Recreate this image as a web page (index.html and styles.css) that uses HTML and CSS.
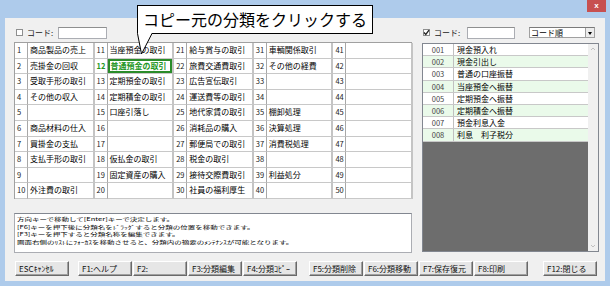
FILE: index.html
```html
<!DOCTYPE html>
<html lang="ja">
<head>
	<meta charset="UTF-8">
	<title>分類コピー</title>
	<link rel="stylesheet" href="styles.css">
</head>
<body>
	<div class="window">
		<div class="titlebar"><span class="close">x</span></div>
		<div class="client">
			<div class="panes">
				<div class="left">
					<div class="tools">
						<span class="chk"></span>
						<span class="lbl">コード:</span>
						<span class="input"></span>
					</div>
					<div class="grid">
						<div class="n">1</div><div class="t">商品製品の売上</div><div class="n">11</div><div class="t">当座預金の取引</div><div class="n">21</div><div class="t">給与賞与の取引</div><div class="n">31</div><div class="t">車輌関係取引</div><div class="n">41</div><div class="t"></div>
						<div class="n">2</div><div class="t">売掛金の回収</div><div class="n sel">12</div><div class="t sel">普通預金の取引</div><div class="n">22</div><div class="t">旅費交通費取引</div><div class="n">32</div><div class="t">その他の経費</div><div class="n">42</div><div class="t"></div>
						<div class="n">3</div><div class="t">受取手形の取引</div><div class="n">13</div><div class="t">定期預金の取引</div><div class="n">23</div><div class="t">広告宣伝取引</div><div class="n">33</div><div class="t"></div><div class="n">43</div><div class="t"></div>
						<div class="n">4</div><div class="t">その他の収入</div><div class="n">14</div><div class="t">定期積金の取引</div><div class="n">24</div><div class="t">運送費等の取引</div><div class="n">34</div><div class="t"></div><div class="n">44</div><div class="t"></div>
						<div class="n">5</div><div class="t"></div><div class="n">15</div><div class="t">口座引落し</div><div class="n">25</div><div class="t">地代家賃の取引</div><div class="n">35</div><div class="t">棚卸処理</div><div class="n">45</div><div class="t"></div>
						<div class="n">6</div><div class="t">商品材料の仕入</div><div class="n">16</div><div class="t"></div><div class="n">26</div><div class="t">消耗品の購入</div><div class="n">36</div><div class="t">決算処理</div><div class="n">46</div><div class="t"></div>
						<div class="n">7</div><div class="t">買掛金の支払</div><div class="n">17</div><div class="t"></div><div class="n">27</div><div class="t">郵便局での取引</div><div class="n">37</div><div class="t">消費税処理</div><div class="n">47</div><div class="t"></div>
						<div class="n">8</div><div class="t">支払手形の取引</div><div class="n">18</div><div class="t">仮払金の取引</div><div class="n">28</div><div class="t">税金の取引</div><div class="n">38</div><div class="t"></div><div class="n">48</div><div class="t"></div>
						<div class="n">9</div><div class="t"></div><div class="n">19</div><div class="t">固定資産の購入</div><div class="n">29</div><div class="t">接待交際費取引</div><div class="n">39</div><div class="t">利益処分</div><div class="n">49</div><div class="t"></div>
						<div class="n">10</div><div class="t">外注費の取引</div><div class="n">20</div><div class="t"></div><div class="n">30</div><div class="t">社員の福利厚生</div><div class="n">40</div><div class="t"></div><div class="n">50</div><div class="t"></div>
					</div>
					<div class="msg">
						<div class="msg-text">
							<p>方向キーで移動して[Enter]キーで決定します。</p>
							<p>[F6]キーを押下後に分類名をﾄﾞﾗｯｸﾞすると分類の位置を移動できます。</p>
							<p>[F3]キーを押下すると分類名称を編集できます。</p>
							<p>画面右側のﾘｽﾄにﾌｫｰｶｽを移動させると、分類内の摘要のﾒﾝﾃﾅﾝｽが可能となります。</p>
						</div>
					</div>
				</div>
				<div class="right">
					<div class="tools">
						<span class="chk on"><svg width="7" height="7" viewBox="0 0 7 7"><polyline points="1,3.5 2.8,5.5 6,1.2" fill="none" stroke="#222" stroke-width="1.3"/></svg></span>
						<span class="lbl lbl-r">コード:</span>
						<span class="input input-r"></span>
						<span class="select">コード順<span class="drop"></span></span>
					</div>
					<div class="list">
						<div class="rows">
							<div class="row"><span class="code">001</span><span class="name">現金預入れ</span></div>
							<div class="row"><span class="code">002</span><span class="name">現金引出し</span></div>
							<div class="row"><span class="code">003</span><span class="name">普通の口座振替</span></div>
							<div class="row"><span class="code">004</span><span class="name">当座預金へ振替</span></div>
							<div class="row"><span class="code">005</span><span class="name">定期預金へ振替</span></div>
							<div class="row"><span class="code">006</span><span class="name">定期積金へ振替</span></div>
							<div class="row"><span class="code">007</span><span class="name">預金利息入金</span></div>
							<div class="row"><span class="code">008</span><span class="name">利息　利子税分</span></div>
						</div>
						<div class="scroll">
							<svg width="10" height="10" viewBox="0 0 10 10"><polyline points="3,6 5,4 7,6" fill="none" stroke="#c0c0c0" stroke-width="1"/></svg>
							<svg width="10" height="10" viewBox="0 0 10 10"><polyline points="3,4 5,6 7,4" fill="none" stroke="#c0c0c0" stroke-width="1"/></svg>
						</div>
					</div>
				</div>
			</div>
			<div class="buttons">
				<span class="btn">ESCｷｬﾝｾﾙ</span>
				<span class="btn gap1">F1:ヘルプ</span>
				<span class="btn">F2:</span>
				<span class="btn">F3:分類編集</span>
				<span class="btn">F4:分類ｺﾋﾟｰ</span>
				<span class="btn gap2">F5:分類削除</span>
				<span class="btn">F6:分類移動</span>
				<span class="btn">F7:保存復元</span>
				<span class="btn">F8:印刷</span>
				<span class="btn gap3">F12:閉じる</span>
			</div>
		</div>
		<!-- 吹き出し -->
		<div class="callout">コピー元の分類をクリックする</div>
		<svg class="tail" width="20" height="24" viewBox="0 0 20 24">
			<polygon points="1.5,0 16,0 5.5,21" fill="#fff"/>
			<polyline points="1.5,0.5 5.5,21 16,0.5" fill="none" stroke="#000" stroke-width="1"/>
		</svg>
	</div>
</body>
</html>
```

FILE: styles.css
```css
*{
	margin: 0;
	padding: 0;
	box-sizing: border-box;
}
body{
	width: 610px;
	height: 286px;
	overflow: hidden;
	font-family: "Noto Sans CJK JP", sans-serif;
	font-size: 8px;
	color: #000;
}
.window{
	position: relative;
	width: 610px;
	height: 286px;
	background: #aecbeb;
	display: flex;
	flex-direction: column;
}
.titlebar{
	height: 18px;
	display: flex;
	justify-content: flex-end;
	padding-right: 4px;
}
.close{
	width: 19px;
	height: 12px;
	background: #c75050;
	color: #fff;
	font-family: "Liberation Sans", sans-serif;
	font-size: 8px;
	font-weight: bold;
	line-height: 12px;
	text-align: center;
}
.client{
	margin: 0 5px;
	height: 263px;
	background: #f0f0f0;
	padding: 8px 0 0 9px;
	display: flex;
	flex-direction: column;
}
.panes{
	display: flex;
	gap: 10px;
}
.left{
	width: 398px;
}
.right{
	width: 177px;
}

/* コード入力欄 */
.tools{
	height: 13px;
	display: flex;
	align-items: center;
}
.chk{
	width: 7px;
	height: 7px;
	margin-left: 2px;
	border: 1px solid #8e8f8f;
	background: #fff;
	display: flex;
	align-items: center;
	justify-content: center;
}
.chk svg{
	margin: -1px;
}
.chk.on{
	margin-left: 1px;
}
.lbl{
	width: 35px;
	padding-left: 4px;
	color: #222;
}
.lbl-r{
	width: 37px;
}
.input{
	width: 49px;
	height: 12px;
	background: #fff;
	border: 1px solid #abadb3;
	border-top-color: #8e8f8f;
}
.input-r{
	width: 48px;
}
.select{
	position: relative;
	margin-left: 14px;
	width: 66px;
	height: 11px;
	background: #fff;
	border: 1px solid #a0a0a0;
	border-top-color: #7a7a7a;
	font-size: 8px;
	line-height: 9px;
	padding-left: 1px;
}
.drop{
	position: absolute;
	right: 0;
	top: 0;
	width: 9px;
	height: 9px;
	background: #ececec;
	border-left: 1px solid #a0a0a0;
}
.drop::after{
	content: "";
	position: absolute;
	left: 2px;
	top: 4px;
	border-left: 2.5px solid transparent;
	border-right: 2.5px solid transparent;
	border-top: 3px solid #000;
}

/* 分類の表 */
.grid{
	margin-top: 3px;
	display: grid;
	grid-template-columns: repeat(5, 13px 66.6px);
	grid-template-rows: repeat(10, 15.6px);
	border-top: 1px solid #a0a0a0;
	border-left: 1px solid #a0a0a0;
	background: #fff;
}
.grid div{
	border-bottom: 1px solid #c8c8c8;
	line-height: 14px;
	white-space: nowrap;
	overflow: hidden;
}
.grid .n{
	border-right: 1px solid #a8a8a8;
	padding-left: 2px;
	color: #222;
	font-size: 7.5px;
}
.grid .t{
	border-right: 2px solid #c4c4c4;
	padding-left: 2px;
}
.grid .sel{
	color: #239623;
	font-weight: bold;
}
.grid .t.sel{
	box-shadow: inset 0 0 0 2px #2a8c2a;
	padding-left: 3px;
}

/* 説明 */
.msg{
	margin-top: 14px;
	height: 40px;
	background: #fff;
	border: 1px solid #abadb3;
	border-top-color: #828790;
	padding: 1px 2px;
	overflow: hidden;
}
.msg-text{
	font-size: 7.5px;
	line-height: 11px;
	white-space: nowrap;
	transform: scaleY(0.68);
	transform-origin: 0 0;
}

/* 摘要の一覧 */
.list{
	margin-top: 4px;
	height: 209px;
	border: 1px solid #828790;
	display: flex;
	background: #6d6d6d;
}
.rows{
	flex: 1;
}
.row{
	display: flex;
	height: 12.2px;
	line-height: 11px;
	border-bottom: 1px solid #c8c8c8;
	background: #fff;
}
.row:nth-child(even){
	background: #eafaea;
}
.code{
	width: 31px;
	text-align: center;
	border-right: 1px solid #c0c0c0;
	color: #444;
	font-size: 7.5px;
}
.name{
	padding-left: 3px;
}
.scroll{
	width: 10px;
	background: #f0f0f0;
	display: flex;
	flex-direction: column;
	justify-content: space-between;
}

/* ボタン */
.buttons{
	margin-top: 8px;
	display: flex;
	padding-left: 1px;
}
.btn{
	width: 54px;
	height: 15px;
	margin-left: 1px;
	border: 1px solid;
	border-color: #fff #696969 #696969 #fff;
	box-shadow: inset -1px -1px 0 #a0a0a0;
	background: #e6e6e6;
	padding-left: 3px;
	line-height: 13px;
	white-space: nowrap;
	color: #111;
}
.btn:first-child{
	margin-left: 0;
}
.gap1{
	margin-left: 9px;
}
.gap2{
	margin-left: 12px;
}
.gap3{
	margin-left: 15px;
}

/* 吹き出し */
.callout{
	position: absolute;
	left: 137px;
	top: 5px;
	width: 236px;
	height: 29px;
	border: 1px solid #000;
	background: #fff;
	font-size: 16px;
	line-height: 26px;
	padding-left: 5px;
	white-space: nowrap;
}
.tail{
	position: absolute;
	left: 136px;
	top: 33px;
}
```
